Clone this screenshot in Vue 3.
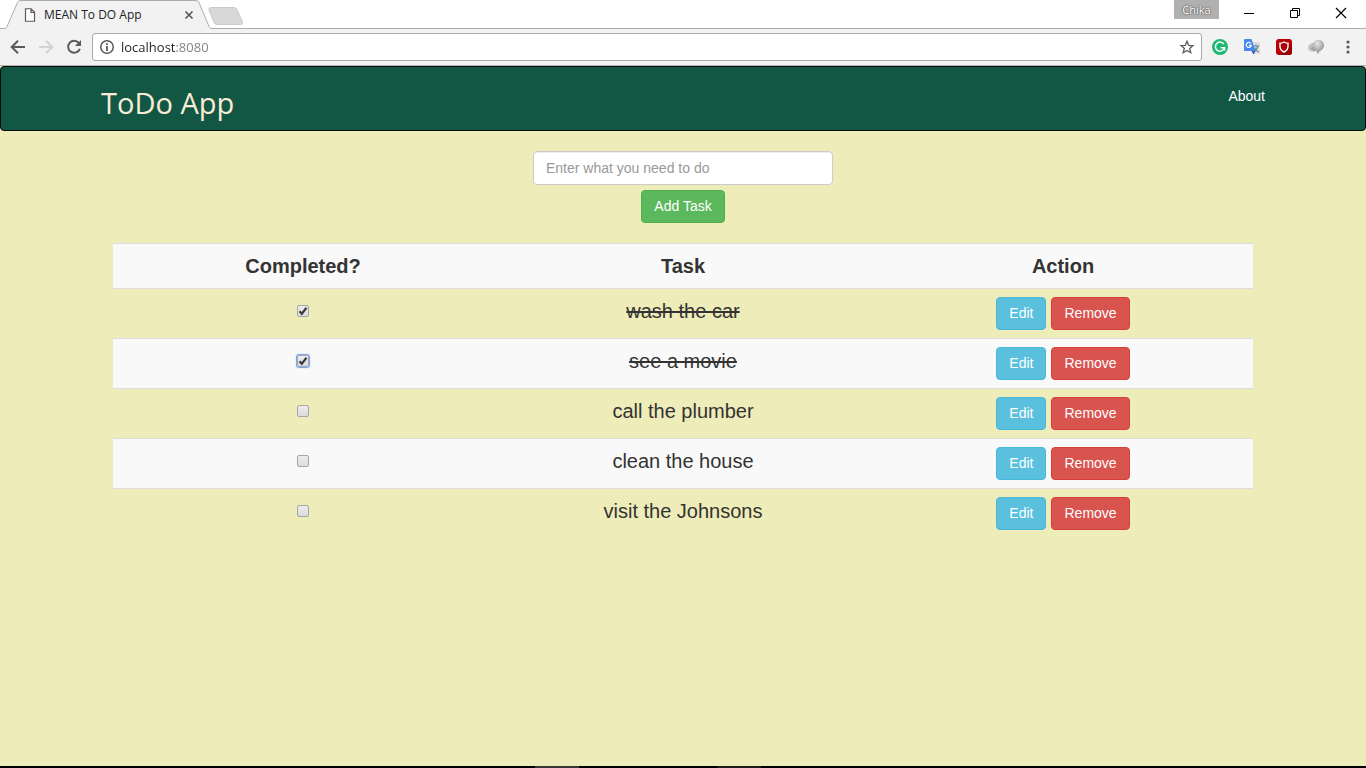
<script setup>
import { ref } from 'vue'

const url = ref('localhost:8080')
const draft = ref('')
const tasks = ref([
  { id: 1, text: 'wash the car', done: true, focused: false },
  { id: 2, text: 'see a movie', done: true, focused: true },
  { id: 3, text: 'call the plumber', done: false, focused: false },
  { id: 4, text: 'clean the house', done: false, focused: false },
  { id: 5, text: 'visit the Johnsons', done: false, focused: false }
])

function addTask() {
  if (!draft.value.trim()) return
  tasks.value.push({ id: Date.now(), text: draft.value, done: false, focused: false })
  draft.value = ''
}
function editTask(task) {
  draft.value = task.text
}
function removeTask(task) {
  tasks.value = tasks.value.filter((t) => t.id !== task.id)
}
</script>

<template>
  <div class="window">
    <header class="tabstrip">
      <div class="tab">
        <svg class="tab-shape" width="214" height="29" viewBox="0 0 214 29" aria-hidden="true">
          <path d="M0 29V28.5H4Q6 28.5 7 26.500L17.500 2.500Q18.500 .5 20 .5H196Q198 .5 199 2.500L209 26.500Q210 28.500 212 28.500H214V29Z" fill="#f2f2f2" />
          <path d="M0 28.500H4Q6 28.500 7 26.500L17.500 2.500Q18.500 .5 20 .5H196Q198 .5 199 2.500L209 26.500Q210 28.500 212 28.500H214" fill="none" stroke="#adadad" />
        </svg>
        <svg class="page-icon" width="12" height="14" viewBox="0 0 12 14" aria-hidden="true">
          <path d="M1.500 .75H7L10.500 4.250V13.250H1.500Z M7 1V4.500H10.500" fill="#fff" stroke="#5a5a5a" stroke-width="1.200" />
        </svg>
        <span class="tab-title">MEAN To DO App</span>
        <button class="icon-btn tab-close" aria-label="Close tab">
          <svg width="10" height="10" viewBox="0 0 10 10"><path d="M1.500 1.500L8.500 8.500M8.500 1.500L1.500 8.500" stroke="#5a5a5a" stroke-width="1.700" /></svg>
        </button>
      </div>
      <button class="icon-btn new-tab" aria-label="New tab">
        <svg width="36" height="18" viewBox="0 0 36 18"><path d="M3 .5H26Q28 .5 29 2.500L34.500 15Q35 17.500 33 17.500H9Q7 17.500 6 15.500L1 3Q.5 .5 3 .5Z" fill="#d8d8d8" stroke="#cacaca" /></svg>
      </button>
      <div class="window-controls">
        <button class="profile">Chika</button>
        <button class="icon-btn win" aria-label="Minimize">
          <svg width="12" height="12" viewBox="0 0 12 12"><path d="M1 6.500H11" stroke="#000" /></svg>
        </button>
        <button class="icon-btn win" aria-label="Restore">
          <svg width="12" height="12" viewBox="0 0 12 12" fill="none" stroke="#000"><path d="M1.500 3.500H8.500V10.500H1.500Z M3.500 3.500V1.500H10.500V8.500H8.500" /></svg>
        </button>
        <button class="icon-btn win" aria-label="Close">
          <svg width="12" height="12" viewBox="0 0 12 12"><path d="M1 1L11 11M11 1L1 11" stroke="#000" stroke-width="1.200" /></svg>
        </button>
      </div>
    </header>

    <div class="toolbar">
      <button class="icon-btn nav" aria-label="Back">
        <svg width="16" height="16" viewBox="0 0 16 16" fill="none" stroke="#5a5a5a" stroke-width="2"><path d="M15 8H2.500M8 1.700L1.700 8L8 14.300" /></svg>
      </button>
      <button class="icon-btn nav" aria-label="Forward">
        <svg width="16" height="16" viewBox="0 0 16 16" fill="none" stroke="#d3d3d3" stroke-width="2"><path d="M1 8H13.500M8 1.700L14.300 8L8 14.300" /></svg>
      </button>
      <button class="icon-btn nav" aria-label="Reload">
        <svg width="16" height="16" viewBox="0 0 16 16"><path d="M12.800 4A6 6 0 1 0 13.800 9.800" fill="none" stroke="#5a5a5a" stroke-width="2" /><path d="M15 1V7H9Z" fill="#5a5a5a" /></svg>
      </button>
      <div class="omnibox">
        <svg width="14" height="14" viewBox="0 0 14 14" aria-hidden="true"><circle cx="7" cy="7" r="6.250" fill="none" stroke="#5a5a5a" stroke-width="1.500" /><path d="M6.100 3.200H7.900V5H6.100ZM6.100 6H7.900V11H6.100Z" fill="#5a5a5a" /></svg>
        <input v-model="url" class="url" type="text" aria-label="Address" spellcheck="false" />
        <button class="icon-btn" aria-label="Bookmark this page">
          <svg width="14" height="14" viewBox="0 0 14 14"><path d="M7 1.300L8.700 5.300L13 5.600L9.700 8.400L10.800 12.700L7 10.400L3.200 12.700L4.300 8.400L1 5.600L5.300 5.300Z" fill="none" stroke="#5a5a5a" stroke-width="1.300" /></svg>
        </button>
      </div>
      <div class="extensions">
        <button class="icon-btn ext" aria-label="Writing assistant">
          <svg width="16" height="16" viewBox="0 0 16 16"><circle cx="8" cy="8" r="8" fill="#1fb872" /><path d="M11.800 5A4.600 4.600 0 1 0 12.400 9" fill="none" stroke="#fff" stroke-width="1.500" /><path d="M8.500 8.800H12.600V11.500" fill="none" stroke="#fff" stroke-width="1.400" /></svg>
        </button>
        <button class="icon-btn ext" aria-label="Translate">
          <svg width="16" height="16" viewBox="0 0 16 16">
            <path d="M7 3H16V15H10Z" fill="#dedede" />
            <path d="M9.500 7H15M12 5.500V7M14 7Q13 11 9.500 12.500M10.500 8.500Q12 12 15 13" fill="none" stroke="#668c96" stroke-width="1.200" />
            <path d="M1 0H7.500L11.500 12H1Q0 12 0 11V1Q0 0 1 0Z" fill="#4688f1" />
            <path d="M7.500 12H11.500L9.500 15.500Z" fill="#3454b4" />
            <path d="M6.800 4.500A2.500 2.500 0 1 0 7.200 6.300H5" fill="none" stroke="#fff" stroke-width="1.200" />
          </svg>
        </button>
        <button class="icon-btn ext" aria-label="Shield">
          <svg width="16" height="16" viewBox="0 0 16 16"><rect width="16" height="16" rx="3" fill="#b80007" /><path d="M3 16L13 5L16 8V13Q16 16 13 16Z" fill="#960006" /><path d="M8 3Q10 4.300 12 4.300V7.500Q12 11 8 13Q4 11 4 7.500V4.300Q6 4.300 8 3Z" fill="#a80006" stroke="#fff" stroke-width="1.400" /></svg>
        </button>
        <button class="icon-btn ext" aria-label="Proxy">
          <svg width="16" height="16" viewBox="0 0 16 16">
            <defs><radialGradient id="ball" cx=".4" cy=".25" r=".8"><stop offset="0" stop-color="#e6e6e6" /><stop offset=".5" stop-color="#b5b5b5" /><stop offset="1" stop-color="#7e7e7e" /></radialGradient></defs>
            <path d="M0 9Q0 6 4 4L8 3L10 9L6 12.500Q1 13 0 9Z" fill="#c2c2c2" /><path d="M2 9L7 7L10 11L6 12.500Z" fill="#a2a2a2" />
            <path d="M10.500 1A5.300 5.300 0 0 1 16 6Q16 10 12 12L9.500 15L8.500 12Q5 10 5 6A5.300 5.300 0 0 1 10.500 1Z" fill="url(#ball)" />
          </svg>
        </button>
        <button class="icon-btn menu" aria-label="Menu">
          <svg width="4" height="14" viewBox="0 0 4 14" fill="#5a5a5a"><circle cx="2" cy="2" r="1.600" /><circle cx="2" cy="7" r="1.600" /><circle cx="2" cy="12" r="1.600" /></svg>
        </button>
      </div>
    </div>

    <div class="page">
      <nav class="navbar">
        <div class="navbar-inner">
          <a class="brand" href="#">ToDo App</a>
          <a class="nav-link" href="#about">About</a>
        </div>
      </nav>

      <main class="container">
        <form class="add-form" @submit.prevent="addTask">
          <input v-model="draft" class="field" type="text" aria-label="New task" placeholder="Enter what you need to do" />
          <button class="btn success" type="submit">Add Task</button>
        </form>

        <table class="tasks">
          <thead>
            <tr><th>Completed?</th><th>Task</th><th>Action</th></tr>
          </thead>
          <tbody>
            <tr v-for="task in tasks" :key="task.id">
              <td>
                <span class="check">
                  <input :id="'task-' + task.id" v-model="task.done" type="checkbox" :class="{ focused: task.focused }" />
                  <svg v-if="task.done" width="12" height="12" viewBox="0 0 12 12" aria-hidden="true"><path d="M2.500 6.200L4.800 8.700L9.500 2.700" fill="none" stroke="#3c3c3c" stroke-width="2.200" /></svg>
                </span>
              </td>
              <td><label :for="'task-' + task.id" :class="{ done: task.done }">{{ task.text }}</label></td>
              <td>
                <div class="actions">
                  <button class="btn info" @click="editTask(task)">Edit</button>
                  <button class="btn danger" @click="removeTask(task)">Remove</button>
                </div>
              </td>
            </tr>
          </tbody>
        </table>
      </main>
    </div>

    <footer class="taskbar"><span class="item wide"></span><span class="item"></span></footer>
  </div>
</template>

<style>
body {
  margin: 0;
}
</style>

<style scoped>
* {
  box-sizing: border-box;
}
.window {
  display: flex;
  flex-direction: column;
  min-height: 100vh;
  font-family: "Liberation Sans", Arial, sans-serif;
  font-size: 14px;
  color: #333;
}
button {
  font-family: inherit;
  cursor: pointer;
}
svg {
  display: block;
  flex: none;
}
.icon-btn {
  display: flex;
  align-items: center;
  justify-content: center;
  padding: 0;
  border: 0;
  background: none;
}

.tabstrip {
  display: flex;
  height: 29px;
  background: #fff;
  border-bottom: 1px solid #adadad;
}
.tab {
  position: relative;
  display: flex;
  align-items: center;
  width: 214px;
  height: 29px;
  padding: 0 20px 0 24px;
}
.tab-shape {
  position: absolute;
  inset: 0;
}
.page-icon,
.tab-title,
.tab-close {
  position: relative;
}
.tab-title {
  flex: 1;
  margin-left: 8px;
  font-family: "Open Sans", sans-serif;
  font-size: 12px;
  line-height: 16px;
  color: #222;
  white-space: nowrap;
}
.new-tab {
  align-self: flex-start;
  margin: 7px 0 0 -6px;
}
.window-controls {
  display: flex;
  margin-left: auto;
  padding-right: 2px;
}
.profile {
  align-self: flex-start;
  width: 45px;
  height: 19px;
  margin-right: 7px;
  padding: 0;
  border: 0;
  background: #b0b0b0;
  color: #fff;
  font-family: "Open Sans", sans-serif;
  font-size: 11px;
  line-height: 18px;
  text-shadow: 0 0 2px #444, 0 0 1px #555;
}
.win {
  width: 46px;
  height: 26px;
}

.toolbar {
  display: flex;
  align-items: center;
  height: 37px;
  padding: 0 8px 0 4px;
  background: #f2f2f2;
  border-bottom: 1px solid #b3b3b3;
}
.nav {
  width: 28px;
  height: 28px;
}
.omnibox {
  display: flex;
  flex: 1;
  align-items: center;
  height: 28px;
  margin-left: 4px;
  padding: 0 7px;
  border: 1px solid #a9a9a9;
  border-radius: 3px;
  background: #fff;
}
.url {
  flex: 1;
  min-width: 0;
  margin-left: 7px;
  padding: 0;
  border: 0;
  outline: 0;
  font-family: "Open Sans", sans-serif;
  font-size: 13px;
  line-height: 20px;
  color: transparent;
  background: linear-gradient(to right, #222 55px, #808080 55px);
  background-clip: text;
}
.extensions {
  display: flex;
  align-items: center;
  margin-left: 2px;
}
.ext {
  width: 32px;
  height: 28px;
}
.menu {
  width: 32px;
  height: 28px;
  margin-right: -6px;
}

.page {
  flex: 1;
  background: #eeecb9;
}
.navbar {
  height: 65px;
  border: 1px solid #080808;
  border-radius: 4px;
  background: #115744;
}
.navbar-inner {
  display: flex;
  justify-content: space-between;
  max-width: 1164px;
  margin: 0 auto;
}
.brand {
  padding: 15px 0;
  font-family: "Open Sans", sans-serif;
  font-size: 29px;
  line-height: 42px;
  color: #faebd7;
  text-decoration: none;
}
.nav-link {
  padding: 19px 0;
  line-height: 20px;
  color: #fff;
  text-decoration: none;
}
.container {
  max-width: 1140px;
  margin: 0 auto;
}
.add-form {
  display: flex;
  flex-direction: column;
  align-items: center;
  gap: 5px;
  padding: 20px 0;
}
.field {
  width: 300px;
  height: 34px;
  padding: 6px 12px;
  border: 1px solid #ccc;
  border-radius: 4px;
  background: #fff;
  box-shadow: inset 0 1px 1px rgba(0, 0, 0, 0.075);
  font-family: inherit;
  font-size: 14px;
  color: #555;
}
.field::placeholder {
  color: #999;
}
.btn {
  padding: 6px 12px;
  border: 1px solid;
  border-radius: 4px;
  color: #fff;
  font-size: 14px;
  line-height: 19px;
}
.success {
  background: #5cb85c;
  border-color: #4cae4c;
}
.info {
  background: #5bc0de;
  border-color: #46b8da;
}
.danger {
  background: #d9534f;
  border-color: #d43f3a;
}
.tasks {
  width: 100%;
  table-layout: fixed;
  border-spacing: 0;
  font-size: 20px;
  line-height: 28px;
  text-align: center;
}
th,
td {
  padding: 8px;
  border-top: 1px solid #ddd;
  vertical-align: top;
}
thead tr,
tbody tr:nth-child(even) {
  background: #f9f9f9;
}
.done {
  text-decoration: line-through;
  text-decoration-thickness: 2px;
}
.check {
  display: inline-grid;
  margin-top: 8px;
  vertical-align: top;
}
.check > * {
  grid-area: 1 / 1;
}
.check input {
  appearance: none;
  width: 12px;
  height: 12px;
  margin: 0;
  border: 1px solid #a6a6a6;
  border-radius: 2px;
  background: linear-gradient(#ededed, #dcdcdc);
}
.check input.focused {
  box-shadow: 0 0 1px 1px #6d9ff0;
}
.check svg {
  pointer-events: none;
}
.actions {
  display: flex;
  justify-content: center;
  gap: 5px;
}

.taskbar {
  display: flex;
  gap: 138px;
  height: 2px;
  padding-left: 535px;
  background: #000;
}
.item {
  width: 44px;
  background: #1c1c1c;
}
.item.wide {
  background: #383838;
}
</style>
